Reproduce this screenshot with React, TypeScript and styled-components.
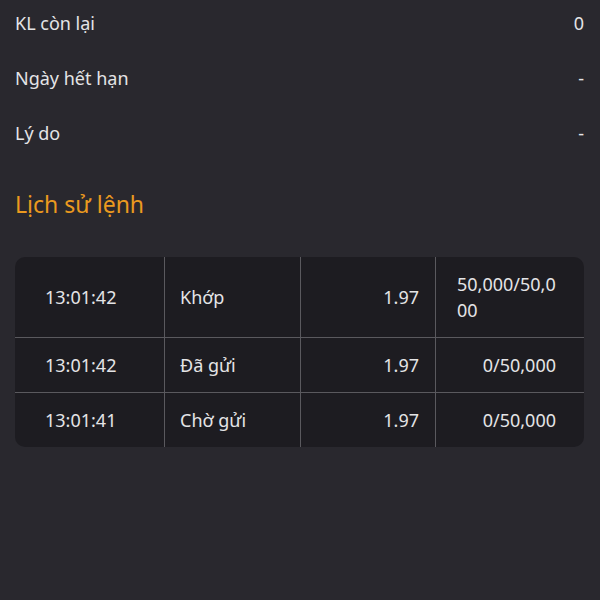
import React from "react";
import styled, { createGlobalStyle } from "styled-components";

const Global = createGlobalStyle`
  html, body { margin: 0; padding: 0; background: #29282e; }
  body { font-family: "Noto Sans", "Open Sans", sans-serif; color: #e4e4e6; }
`;

const Page = styled.div`
  width: 600px;
  height: 600px;
  box-sizing: border-box;
  padding: 10px 16px 0 15px;
  background: #29282e;
  display: flex;
  flex-direction: column;
  overflow: hidden;
`;

const InfoList = styled.div`
  display: flex;
  flex-direction: column;
  gap: 29px;
`;

const InfoRow = styled.div`
  display: flex;
  justify-content: space-between;
  align-items: center;
  font-size: 18px;
  line-height: 26px;
  color: #e4e4e6;
`;

const Heading = styled.h2`
  margin: 42px 0 0;
  font-size: 23px;
  line-height: 32px;
  font-weight: 400;
  color: #eb9a1f;
`;

const Table = styled.div`
  margin-top: 37px;
  background: #1d1c21;
  border-radius: 10px;
  overflow: hidden;
  display: flex;
  flex-direction: column;
`;

const Row = styled.div`
  display: grid;
  grid-template-columns: 150px 136px 135px 1fr;
  & + & { border-top: 1px solid #5a595e; }
`;

const Cell = styled.div<{ $align?: "left" | "right"; $pl?: number; $pr?: number; $last?: boolean }>`
  display: flex;
  align-items: center;
  justify-content: ${(p) => (p.$align === "right" ? "flex-end" : "flex-start")};
  padding: 14px ${(p) => p.$pr ?? 15}px 14px ${(p) => p.$pl ?? 15}px;
  font-size: 18px;
  line-height: 26px;
  color: #e4e4e6;
  border-right: ${(p) => (p.$last ? "none" : "1px solid #5a595e")};
`;

const Wrap = styled.span`
  max-width: 99px;
  word-break: break-all;
  text-align: left;
`;

const rows = [
  { time: "13:01:42", status: "Khớp", price: "1.97", vol: "50,000/50,000" },
  { time: "13:01:42", status: "Đã gửi", price: "1.97", vol: "0/50,000" },
  { time: "13:01:41", status: "Chờ gửi", price: "1.97", vol: "0/50,000" },
];

export default function App() {
  return (
    <>
      <Global />
      <Page>
        <InfoList>
          <InfoRow>
            <span>KL còn lại</span>
            <span>0</span>
          </InfoRow>
          <InfoRow>
            <span>Ngày hết hạn</span>
            <span>-</span>
          </InfoRow>
          <InfoRow>
            <span>Lý do</span>
            <span>-</span>
          </InfoRow>
        </InfoList>
        <Heading>Lịch sử lệnh</Heading>
        <Table>
          {rows.map((r, i) => (
            <Row key={i}>
              <Cell $pl={30}>{r.time}</Cell>
              <Cell>{r.status}</Cell>
              <Cell $align="right" $pr={16}>{r.price}</Cell>
              <Cell $align="right" $pl={18} $pr={28} $last>
                <Wrap>{r.vol}</Wrap>
              </Cell>
            </Row>
          ))}
        </Table>
      </Page>
    </>
  );
}
